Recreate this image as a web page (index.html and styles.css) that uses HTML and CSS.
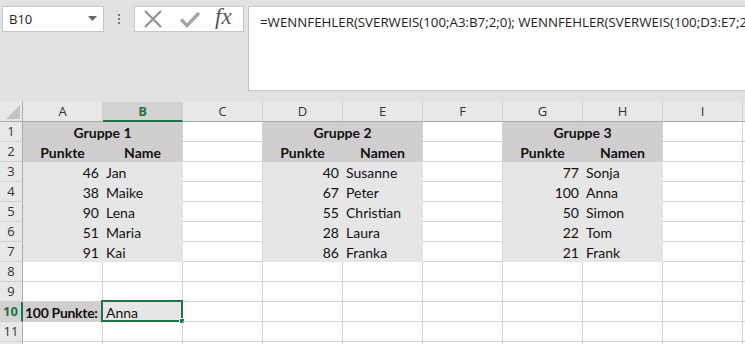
FILE: index.html
```html
<!DOCTYPE html>
<html lang="de">
<head>
<meta charset="utf-8">
<title>SVERWEIS</title>
<link rel="stylesheet" href="styles.css">
</head>
<body>
<div class="app">
  <div class="topbar">
    <div class="namebox">
      <span class="namebox-text">B10</span>
      <svg class="namebox-arrow" width="9" height="5" viewBox="0 0 9 5"><path d="M0 0h9L4.5 5z" fill="#666"/></svg>
    </div>
    <div class="grip">
      <span></span><span></span><span></span>
    </div>
    <div class="fxbox">
      <svg class="ico" width="20" height="18" viewBox="0 0 20 18"><path d="M2 1L18 17M18 1L2 17" stroke="#8f8f8f" stroke-width="2" fill="none"/></svg>
      <svg class="ico" width="22" height="18" viewBox="0 0 22 18"><path d="M2 9.5L8 15.5L20 3" stroke="#a6a6a6" stroke-width="3.4" fill="none"/></svg>
      <span class="fx">fx</span>
    </div>
    <div class="formula">=WENNFEHLER(SVERWEIS(100;A3:B7;2;0); WENNFEHLER(SVERWEIS(100;D3:E7;2;0); SVERWEIS(100;G3:H7;2;0)))</div>
  </div>

  <div class="grid">
    <div class="corner"><svg width="14" height="14" viewBox="0 0 14 14"><path d="M14 0V14H0z" fill="#c4c4c4"/></svg></div>
    <div class="colhead">A</div>
    <div class="colhead sel">B</div>
    <div class="colhead">C</div>
    <div class="colhead">D</div>
    <div class="colhead">E</div>
    <div class="colhead">F</div>
    <div class="colhead">G</div>
    <div class="colhead">H</div>
    <div class="colhead">I</div>
    <div class="colhead">J</div>

    <div class="rowhead">1</div>
    <div class="c hd b span2">Gruppe 1</div>
    <div class="c"></div>
    <div class="c hd b span2">Gruppe 2</div>
    <div class="c"></div>
    <div class="c hd b span2">Gruppe 3</div>
    <div class="c"></div>
    <div class="c"></div>

    <div class="rowhead">2</div>
    <div class="c hd b">Punkte</div>
    <div class="c hd b">Name</div>
    <div class="c"></div>
    <div class="c hd b">Punkte</div>
    <div class="c hd b">Namen</div>
    <div class="c"></div>
    <div class="c hd b">Punkte</div>
    <div class="c hd b">Namen</div>
    <div class="c"></div>
    <div class="c"></div>

    <div class="rowhead">3</div>
    <div class="c dt num">46</div>
    <div class="c dt">Jan</div>
    <div class="c"></div>
    <div class="c dt num">40</div>
    <div class="c dt">Susanne</div>
    <div class="c"></div>
    <div class="c dt num">77</div>
    <div class="c dt">Sonja</div>
    <div class="c"></div>
    <div class="c"></div>

    <div class="rowhead">4</div>
    <div class="c dt num">38</div>
    <div class="c dt">Maike</div>
    <div class="c"></div>
    <div class="c dt num">67</div>
    <div class="c dt">Peter</div>
    <div class="c"></div>
    <div class="c dt num">100</div>
    <div class="c dt">Anna</div>
    <div class="c"></div>
    <div class="c"></div>

    <div class="rowhead">5</div>
    <div class="c dt num">90</div>
    <div class="c dt">Lena</div>
    <div class="c"></div>
    <div class="c dt num">55</div>
    <div class="c dt">Christian</div>
    <div class="c"></div>
    <div class="c dt num">50</div>
    <div class="c dt">Simon</div>
    <div class="c"></div>
    <div class="c"></div>

    <div class="rowhead">6</div>
    <div class="c dt num">51</div>
    <div class="c dt">Maria</div>
    <div class="c"></div>
    <div class="c dt num">28</div>
    <div class="c dt">Laura</div>
    <div class="c"></div>
    <div class="c dt num">22</div>
    <div class="c dt">Tom</div>
    <div class="c"></div>
    <div class="c"></div>

    <div class="rowhead">7</div>
    <div class="c dt num">91</div>
    <div class="c dt">Kai</div>
    <div class="c"></div>
    <div class="c dt num">86</div>
    <div class="c dt">Franka</div>
    <div class="c"></div>
    <div class="c dt num">21</div>
    <div class="c dt">Frank</div>
    <div class="c"></div>
    <div class="c"></div>

    <div class="rowhead">8</div>
    <div class="c"></div><div class="c"></div><div class="c"></div><div class="c"></div><div class="c"></div>
    <div class="c"></div><div class="c"></div><div class="c"></div><div class="c"></div><div class="c"></div>

    <div class="rowhead">9</div>
    <div class="c"></div><div class="c"></div><div class="c"></div><div class="c"></div><div class="c"></div>
    <div class="c"></div><div class="c"></div><div class="c"></div><div class="c"></div><div class="c"></div>

    <div class="rowhead sel">10</div>
    <div class="c hd label">100 Punkte:</div>
    <div class="c dt active">Anna<span class="selbox"><span class="handle"></span></span></div>
    <div class="c"></div><div class="c"></div><div class="c"></div>
    <div class="c"></div><div class="c"></div><div class="c"></div><div class="c"></div><div class="c"></div>

    <div class="rowhead">11</div>
    <div class="c"></div><div class="c"></div><div class="c"></div><div class="c"></div><div class="c"></div>
    <div class="c"></div><div class="c"></div><div class="c"></div><div class="c"></div><div class="c"></div>

    <div class="rowhead">12</div>
    <div class="c"></div><div class="c"></div><div class="c"></div><div class="c"></div><div class="c"></div>
    <div class="c"></div><div class="c"></div><div class="c"></div><div class="c"></div><div class="c"></div>
  </div>
</div>
</body>
</html>
```

FILE: styles.css
```css
* { box-sizing: border-box; }
html, body {
  margin: 0;
  padding: 0;
  width: 745px;
  height: 344px;
  overflow: hidden;
  background: #ffffff;
}
.app {
  width: 745px;
  height: 344px;
  overflow: hidden;
  background: #e2e2e2;
}
.topbar {
  height: 102px;
  padding-top: 6px;
  display: flex;
  align-items: flex-start;
  overflow: hidden;
}
.namebox {
  flex: 0 0 102px;
  margin-left: 2px;
  height: 26px;
  background: #fff;
  border: 1px solid #c6c6c6;
  display: flex;
  align-items: center;
  justify-content: space-between;
  padding: 0 6px 0 6px;
  font-family: "Open Sans", "Noto Sans", sans-serif;
  font-size: 13px;
  color: #222;
}
.namebox-arrow { margin-bottom: 1px; }
.grip {
  flex: 0 0 30px;
  height: 26px;
  display: flex;
  flex-direction: column;
  align-items: center;
  justify-content: center;
  gap: 2px;
}
.grip span {
  width: 2px;
  height: 2px;
  background: #777;
}
.fxbox {
  flex: 0 0 110px;
  height: 26px;
  background: #fff;
  border: 1px solid #c6c6c6;
  display: flex;
  align-items: center;
  padding-left: 8px;
  gap: 16px;
}
.ico { display: block; flex: 0 0 auto; }
.fx {
  font-family: "Liberation Serif", "DejaVu Serif", serif;
  font-style: italic;
  font-size: 23px;
  color: #555;
  letter-spacing: 0;
  margin-left: -2px;
  margin-top: -4px;
  white-space: nowrap;
}
.formula {
  flex: 0 0 520px;
  margin-left: 4px;
  height: 85px;
  background: #fff;
  border: 1px solid #c6c6c6;
  border-right: none;
  padding: 6px 0 0 11px;
  font-family: "Open Sans", "Noto Sans", sans-serif;
  font-size: 13.3px;
  color: #222;
  white-space: nowrap;
  overflow: hidden;
}

.grid {
  display: grid;
  grid-template-columns: 23px repeat(10, 80px);
  grid-auto-rows: 20px;
  width: 823px;
  background: #fff;
}
.corner {
  background: #e8e8e8;
  border-right: 1px solid #ababab;
  border-bottom: 1px solid #ababab;
  display: flex;
  align-items: flex-end;
  justify-content: flex-end;
  padding: 0 2px 2px 0;
}
.colhead {
  background: #e8e8e8;
  border-right: 1px solid #d0d0d0;
  border-bottom: 1px solid #ababab;
  font-family: "Open Sans", "Noto Sans", sans-serif;
  font-size: 13px;
  color: #333;
  text-align: center;
  line-height: 19px;
}
.colhead.sel {
  background: #d2d2d2;
  border-bottom: 2px solid #217346;
  color: #217346;
  font-weight: 700;
}
.rowhead {
  background: #e8e8e8;
  border-right: 1px solid #ababab;
  border-bottom: 1px solid #d0d0d0;
  font-family: "Open Sans", "Noto Sans", sans-serif;
  font-size: 13px;
  color: #333;
  line-height: 19px;
  text-align: center;
}
.rowhead.sel {
  background: #d2d2d2;
  border-right: 2px solid #217346;
  color: #217346;
  font-weight: 700;
}
.c {
  border-right: 1px solid #d4d4d4;
  border-bottom: 1px solid #d4d4d4;
  font-family: Lato, "Open Sans", sans-serif;
  font-size: 14px;
  color: #111;
  line-height: 19px;
  padding: 1px 3px 0 3px;
  white-space: nowrap;
  position: relative;
}
.hd {
  background: #d0cece;
  border-color: transparent;
}
.dt {
  background: #e7e6e6;
  border-color: transparent;
}
.b {
  font-weight: 700;
  text-align: center;
}
.span2 { grid-column: span 2; }
.num { text-align: right; }
.label {
  font-weight: 700;
  padding-left: 2px;
  letter-spacing: -0.3px;
}
.selbox {
  position: absolute;
  top: -2px;
  left: -2px;
  right: -1px;
  bottom: -1px;
  border: 2px solid #217346;
}
.handle {
  position: absolute;
  right: -4px;
  bottom: -4px;
  width: 6px;
  height: 6px;
  background: #217346;
  border: 1px solid #fff;
}
```
